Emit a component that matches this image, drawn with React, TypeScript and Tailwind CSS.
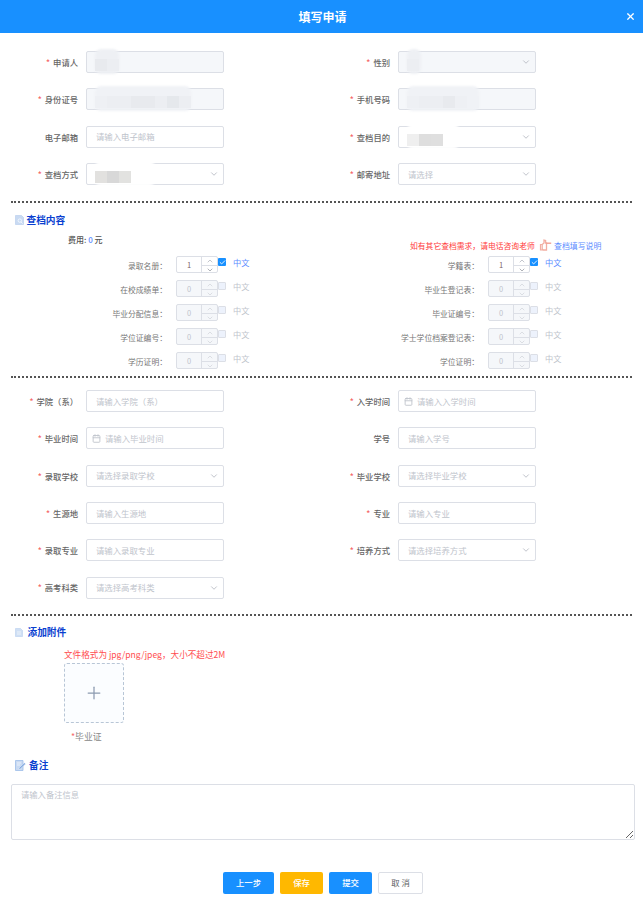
import { Calendar, ChevronDown, ChevronUp, Check, Plus, X } from 'lucide-react';

const FONT = { fontFamily: '"Noto Sans CJK SC", "Liberation Sans", sans-serif' };

type Smudged = { width: number; cells: string[]; haze: string };

type Field = {
  label: string;
  required?: boolean;
  kind?: 'input' | 'select' | 'date';
  placeholder?: string;
  disabled?: boolean;
  smudge?: Smudged;
};

const BASIC: Field[] = [
  { label: '申请人', required: true, disabled: true, smudge: { width: 24, haze: 'bg-[#eef0f4]', cells: ['bg-[#e8eaee]', 'bg-[#eceef2]'] } },
  { label: '性别', required: true, disabled: true, kind: 'select', smudge: { width: 14, haze: 'bg-[#eef0f4]', cells: ['bg-[#eceef2]'] } },
  {
    label: '身份证号',
    required: true,
    disabled: true,
    smudge: {
      width: 96,
      haze: 'bg-[#f0f2f6]',
      cells: ['bg-[#eef0f4]', 'bg-[#eceef2]', 'bg-[#eceef2]', 'bg-[#e8eaee]', 'bg-[#e8eaee]', 'bg-[#eceef2]', 'bg-[#e5e8ec]', 'bg-[#eceef2]'],
    },
  },
  {
    label: '手机号码',
    required: true,
    disabled: true,
    smudge: {
      width: 72,
      haze: 'bg-[#f0f2f6]',
      cells: ['bg-[#eef0f4]', 'bg-[#eceef2]', 'bg-[#eceef2]', 'bg-[#e8eaee]', 'bg-[#eef0f4]', 'bg-[#f0f2f6]'],
    },
  },
  { label: '电子邮箱', placeholder: '请输入电子邮箱' },
  { label: '查档目的', required: true, kind: 'select', smudge: { width: 52, haze: 'bg-white', cells: ['bg-[#efefef]', 'bg-[#dedede]', 'bg-[#dfdfdf]'] } },
  { label: '查档方式', required: true, kind: 'select', smudge: { width: 60, haze: 'bg-white', cells: ['bg-[#e2e1df]', 'bg-[#d8d8d8]', 'bg-[#e2e2e0]'] } },
  { label: '邮寄地址', required: true, kind: 'select', placeholder: '请选择' },
];

const SCHOOL: Field[] = [
  { label: '学院（系）', required: true, placeholder: '请输入学院（系）' },
  { label: '入学时间', required: true, kind: 'date', placeholder: '请输入入学时间' },
  { label: '毕业时间', required: true, kind: 'date', placeholder: '请输入毕业时间' },
  { label: '学号', placeholder: '请输入学号' },
  { label: '录取学校', required: true, kind: 'select', placeholder: '请选择录取学校' },
  { label: '毕业学校', required: true, kind: 'select', placeholder: '请选择毕业学校' },
  { label: '生源地', required: true, placeholder: '请输入生源地' },
  { label: '专业', required: true, placeholder: '请输入专业' },
  { label: '录取专业', required: true, placeholder: '请输入录取专业' },
  { label: '培养方式', required: true, kind: 'select', placeholder: '请选择培养方式' },
  { label: '高考科类', required: true, kind: 'select', placeholder: '请选择高考科类' },
];

const ARCHIVES = [
  { label: '录取名册', value: 1 },
  { label: '学籍表', value: 1 },
  { label: '在校成绩单', value: 0 },
  { label: '毕业生登记表', value: 0 },
  { label: '毕业分配信息', value: 0 },
  { label: '毕业证编号', value: 0 },
  { label: '学位证编号', value: 0 },
  { label: '学士学位档案登记表', value: 0 },
  { label: '学历证明', value: 0 },
  { label: '学位证明', value: 0 },
];

// redacted values in the original: soft haze with a grey mosaic on the lower part
function Smudge({ smudge }: { smudge: Smudged }) {
  return (
    <>
      <div className={`absolute left-[8px] top-[-3px] bottom-[-2px] rounded-[6px] blur-[1px] ${smudge.haze}`} style={{ width: smudge.width }} />
      <div className="absolute left-[8px] top-[7px] bottom-[1px] flex">
        {smudge.cells.map((c, i) => (
          <div key={i} className={`w-[12px] ${c}`} />
        ))}
      </div>
    </>
  );
}

function FormField({ field }: { field: Field }) {
  const { label, required, kind = 'input', placeholder, disabled, smudge } = field;
  return (
    <div className="flex items-center h-[22px]">
      <label className="w-[78px] shrink-0 text-right text-[8.3px] font-medium text-[#666] whitespace-nowrap">
        {required && <span className="text-[#f56c6c] mr-[3px]">*</span>}
        {label}
      </label>
      <div
        className={`relative ml-[8px] w-[138px] h-[22px] flex items-center rounded-[2px] border border-[#dcdfe6] ${disabled ? 'bg-[#f5f7fa]' : 'bg-white'}`}
      >
        {kind === 'date' && <Calendar size={9} strokeWidth={2.4} className="absolute left-[5px] text-[#c0c4cc]" />}
        {placeholder && (
          <span className={`text-[8.4px] text-[#c0c4cc] whitespace-nowrap ${kind === 'date' ? 'pl-[18px]' : 'pl-[9px]'}`}>
            {placeholder}
          </span>
        )}
        {smudge && <Smudge smudge={smudge} />}
        {kind === 'select' && <ChevronDown size={10} strokeWidth={2} className="absolute right-[4px] text-[#b4b8c0]" />}
      </div>
    </div>
  );
}

function Divider() {
  return <div className="mx-[11px] border-t-2 border-dotted border-[#555]" />;
}

function SectionTitle({ icon, text, gap }: { icon: React.ReactNode; text: string; gap: string }) {
  return (
    <div className={`flex items-center pl-[15px] h-[14px] ${gap}`}>
      {icon}
      <span className="text-[9.7px] font-bold text-[#0a3fd0] whitespace-nowrap">{text}</span>
    </div>
  );
}

function SearchDocIcon() {
  return (
    <svg width="9" height="10" viewBox="0 0 9 10" className="shrink-0">
      <path d="M0.5 0.5H6.5L8.5 2.5V9.5H0.5Z" fill="#c9daf2" stroke="#b4cbec" strokeWidth="0.6" />
      <circle cx="4.8" cy="5.6" r="1.7" fill="none" stroke="#f4f8fe" strokeWidth="0.9" />
      <path d="M6 7L7.6 8.6" stroke="#f4f8fe" strokeWidth="0.9" />
    </svg>
  );
}

function AttachDocIcon() {
  return (
    <svg width="8" height="9" viewBox="0 0 8 9" className="shrink-0">
      <path d="M0.5 0.5H5.5L7.5 2.5V8.5H0.5Z" fill="#cfdff4" stroke="#b9cfee" strokeWidth="0.6" />
      <path d="M2 4H6M2 6H6" stroke="#f4f8fe" strokeWidth="0.8" />
    </svg>
  );
}

function NoteIcon() {
  return (
    <svg width="11" height="11" viewBox="0 0 11 11" className="shrink-0">
      <path d="M0.5 0.5H8V10.5H0.5Z" fill="#c9daf2" stroke="#9dbce8" strokeWidth="0.8" />
      <path d="M2 3H6M2 5H5" stroke="#f4f8fe" strokeWidth="0.8" />
      <path d="M4 8L9.5 2.8L10.6 3.9L5.2 9L3.8 9.3Z" fill="#7fa8e0" stroke="#ffffff" strokeWidth="0.4" />
    </svg>
  );
}

function PointingHandIcon() {
  return (
    <svg width="13" height="12" viewBox="0 0 13 12" className="ml-[4px] shrink-0" fill="none">
      <path d="M1.5 5.5H3.2V11H1.5Z" stroke="#f2aea2" strokeWidth="1.2" />
      <path d="M3.2 5.5L5 4V1.2L6.6 1.6V4H7.5V11H4.2L3.2 10" stroke="#f2aea2" strokeWidth="1.3" />
      <path d="M7.5 4.2H12.2" stroke="#f09a8c" strokeWidth="1.3" />
    </svg>
  );
}

function ArchiveRow({ label, value }: { label: string; value: number }) {
  const on = value > 0;
  return (
    <div className="flex items-start h-[17px]">
      <span className="w-[167px] shrink-0 pt-[4px] text-right text-[7.8px] text-[#777] whitespace-nowrap">{label}：</span>
      <div className={`ml-[9px] w-[42px] h-[17px] flex rounded-[2px] border border-[#dcdfe6] ${on ? 'bg-white' : 'bg-[#f5f7fa]'}`}>
        <span className={`flex-1 flex items-center justify-center text-[7.5px] ${on ? 'text-[#7a5f66]' : 'text-[#c0c4cc]'}`}>{value}</span>
        <div className="w-[16px] flex flex-col border-l border-[#dcdfe6]">
          <div className="flex-1 flex items-center justify-center border-b border-[#dcdfe6]">
            <ChevronUp size={8} strokeWidth={2.4} className={on ? 'text-[#b4b8c0]' : 'text-[#d4d7dd]'} />
          </div>
          <div className="flex-1 flex items-center justify-center">
            <ChevronDown size={8} strokeWidth={2.4} className={on ? 'text-[#9a9ea6]' : 'text-[#d4d7dd]'} />
          </div>
        </div>
      </div>
      <div
        className={`mt-[2px] w-[8px] h-[8px] flex items-center justify-center rounded-[1px] ${on ? 'bg-[#1890ff]' : 'bg-[#edf2fc] border border-[#dcdfe6]'}`}
      >
        {on && <Check size={7} strokeWidth={3} className="text-white" />}
      </div>
      <span className={`ml-[7px] text-[8.2px] leading-[12px] ${on ? 'text-[#5b8cff]' : 'text-[#c0c4cc]'}`}>中文</span>
    </div>
  );
}

export default function App() {
  return (
    <div className="w-[643px] h-[905px] bg-white overflow-hidden" style={FONT}>
      <header className="relative h-[33px] bg-[#1890ff] flex items-center justify-center">
        <span className="pl-[2px] text-[12px] font-bold text-white">填写申请</span>
        <X size={11} strokeWidth={2.6} className="absolute right-[7px] top-[11px] text-white" />
      </header>

      {/* Basic info */}
      <div className="pt-[18px] grid grid-cols-[312px_1fr] gap-y-[15.4px]">
        {BASIC.map((f) => (
          <FormField key={f.label} field={f} />
        ))}
      </div>

      <div className="mt-[16px]">
        <Divider />
      </div>

      {/* Archive content */}
      <div className="mt-[10px]">
        <SectionTitle gap="gap-[2.5px]" text="查档内容" icon={<SearchDocIcon />} />
      </div>
      <div className="relative h-[11px] mt-[7px]">
        <div className="pl-[68px] text-[8px] font-medium leading-[11px] text-[#555]">
          费用: <span className="text-[#5b8cff]">0</span> 元
        </div>
        <div className="absolute left-[410px] top-[5px] flex items-center whitespace-nowrap">
          <span className="w-[125px] text-[7.8px] leading-[11px] text-[#ff3b3b]">如有其它查档需求，请电话咨询老师</span>
          <PointingHandIcon />
          <span className="ml-[2px] text-[7.9px] leading-[11px] text-[#5b8cff]">查档填写说明</span>
        </div>
      </div>
      <div className="mt-[11px] grid grid-cols-[312px_1fr] gap-y-[7px]">
        {ARCHIVES.map((a) => (
          <ArchiveRow key={a.label} label={a.label} value={a.value} />
        ))}
      </div>

      <div className="mt-[7px]">
        <Divider />
      </div>

      {/* School info */}
      <div className="pt-[12px] grid grid-cols-[312px_1fr] gap-y-[15.3px]">
        {SCHOOL.map((f) => (
          <FormField key={f.label} field={f} />
        ))}
      </div>

      <div className="mt-[15px]">
        <Divider />
      </div>

      {/* Attachments */}
      <div className="mt-[10px]">
        <SectionTitle gap="gap-[4.5px]" text="添加附件" icon={<AttachDocIcon />} />
      </div>
      <div className="pl-[64px] mt-[8px]">
        <p className="text-[8.6px] leading-[12px] text-[#ff4d4f] whitespace-nowrap">文件格式为 jpg/png/jpeg，大小不超过2M</p>
        <div className="mt-[3px] w-[60px] h-[60px] flex items-center justify-center rounded-[3px] border border-dashed border-[#b8c6d6] bg-[#fbfdff]">
          <Plus size={20} strokeWidth={1.5} className="text-[#8c9bb0]" />
        </div>
        <p className="mt-[8px] pl-[7px] text-[8.8px] leading-[12px] text-[#888]">
          <span className="text-[#f56c6c]">*</span>毕业证
        </p>
      </div>

      {/* Remarks */}
      <div className="mt-[16px]">
        <SectionTitle gap="gap-[3px]" text="备注" icon={<NoteIcon />} />
      </div>
      <div className="mx-[11px] mt-[11px]">
        <textarea
          placeholder="请输入备注信息"
          className="block w-[624px] h-[56px] px-[9px] py-[3px] text-[8.3px] rounded-[2px] border border-[#dcdfe6] placeholder:text-[#c0c4cc]"
        />
      </div>

      <div className="mt-[32px] flex justify-center gap-[6px] pl-[3px]">
        <button className="w-[51px] h-[22px] rounded-[2px] bg-[#1890ff] text-[8.4px] font-medium text-white">上一步</button>
        <button className="w-[43px] h-[22px] rounded-[2px] bg-[#ffb800] text-[8.4px] font-medium text-white">保存</button>
        <button className="w-[43px] h-[22px] rounded-[2px] bg-[#1890ff] text-[8.4px] font-medium text-white">提交</button>
        <button className="w-[45px] h-[22px] rounded-[2px] bg-white border border-[#dcdfe6] text-[8.4px] text-[#606266]">取 消</button>
      </div>
    </div>
  );
}
